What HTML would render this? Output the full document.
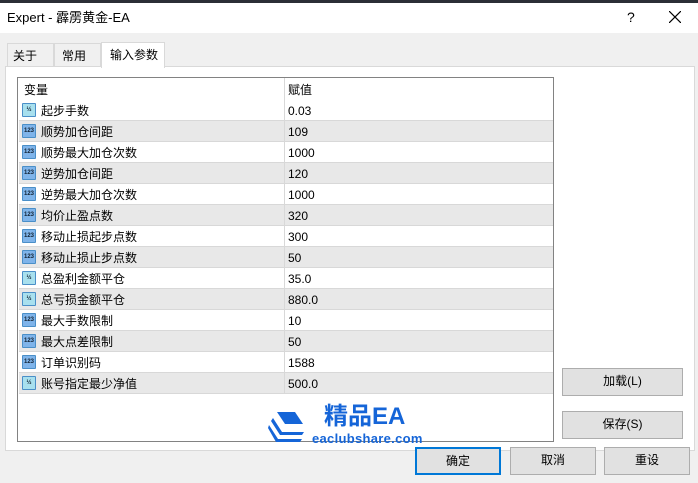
<!DOCTYPE html><html><head><meta charset="utf-8"><style>
*{margin:0;padding:0;box-sizing:border-box}
body{width:698px;height:483px;background:#f0f0f0;font-family:"Liberation Sans","Noto Sans CJK SC",sans-serif;font-size:12px;color:#000;position:relative;overflow:hidden}
.a{position:absolute}
.t{line-height:20px;height:20px}
.btn{position:absolute;background:#e1e1e1;border:1px solid #adadad;text-align:center;line-height:25px;font-size:12px}
.row{position:absolute;left:1px;width:534px;height:21px;border-bottom:1px solid #d8d8d8}
.row .n{position:absolute;left:22px;top:1px;line-height:20px;height:20px}
.row .v{position:absolute;left:269px;top:1px;line-height:20px;height:20px}
.row .d{position:absolute;left:265px;top:0;width:1px;height:21px;background:#d8d8d8}
.ic{position:absolute;left:3px;top:3px;width:14px;height:14px;border:1px solid #4a8fc8;border-radius:1px;font-size:6px;line-height:12px;text-align:center;color:#123;font-weight:bold}
.i1{background:#a8e0ee}.i2{background:#7fb4ea}
</style></head><body>
<div class="a" style="left:0;top:0;width:698px;height:3px;background:#2b2f36"></div>
<div class="a" style="left:0;top:3px;width:698px;height:30px;background:#fff"></div>
<div class="a" style="left:7px;top:9px;font-size:13px;line-height:18px">Expert - 霹雳黄金-EA</div>
<div class="a" style="left:627px;top:8px;font-size:14px;line-height:18px">?</div>
<svg class="a" style="left:669px;top:11px" width="12" height="12"><path d="M0 0L12 12M12 0L0 12" stroke="#000" stroke-width="1.2"/></svg>
<div class="a" style="left:7px;top:43px;width:47px;height:24px;border:1px solid #d9d9d9;border-bottom:none;background:#f0f0f0;padding:0 0 0 5px;line-height:24px">关于</div>
<div class="a" style="left:54px;top:43px;width:47px;height:24px;border:1px solid #d9d9d9;border-bottom:none;background:#f0f0f0;padding:0 0 0 7px;line-height:24px">常用</div>
<div class="a" style="left:5px;top:66px;width:690px;height:385px;background:#fff;border:1px solid #d9d9d9"></div>
<div class="a" style="left:101px;top:42px;width:64px;height:26px;border:1px solid #d9d9d9;border-bottom:none;background:#fff;padding:0 0 0 8px;line-height:24px">输入参数</div>
<div class="a" style="left:17px;top:77px;width:537px;height:365px;border:1px solid #828282;background:#fff">
<div class="a t" style="left:6px;top:2px">变量</div>
<div class="a" style="left:266px;top:0;width:1px;height:22px;background:#d8d8d8"></div>
<div class="a t" style="left:270px;top:2px">赋值</div>
<div id="rows"></div>
</div>
<script>
var d=[["起步手数","0.03",1],["顺势加仓间距","109",2],["顺势最大加仓次数","1000",2],["逆势加仓间距","120",2],["逆势最大加仓次数","1000",2],["均价止盈点数","320",2],["移动止损起步点数","300",2],["移动止损止步点数","50",2],["总盈利金额平仓","35.0",1],["总亏损金额平仓","880.0",1],["最大手数限制","10",2],["最大点差限制","50",2],["订单识别码","1588",2],["账号指定最少净值","500.0",1]];
var h="";d.forEach(function(r,i){h+='<div class="row" style="top:'+(22+21*i)+'px;background:'+(i%2?'#e8e8e8':'#fff')+'"><div class="ic i'+r[2]+'">'+(r[2]==1?'½':'123')+'</div><div class="n">'+r[0]+'</div><div class="d"></div><div class="v">'+r[1]+'</div></div>';});
document.getElementById("rows").outerHTML=h;
</script>
<svg class="a" style="left:268px;top:410px" width="42" height="34" viewBox="0 0 42 34"><path d="M9 2h18l8 12H17z" fill="#1565d8"/><path d="M5 8l9 14h22l-2 3H12L3 11z" fill="#1565d8"/><path d="M1 15l9 14h24l-2 3H8L0 18z" fill="#1565d8"/></svg>
<div class="a" style="left:324px;top:402px;font-size:24px;line-height:30px;font-weight:bold;color:#1565d8">精品EA</div>
<div class="a" style="left:312px;top:431px;font-size:13px;line-height:16px;font-weight:bold;color:#1565d8;letter-spacing:0.3px">eaclubshare.com</div>
<div class="btn" style="left:562px;top:368px;width:121px;height:28px">加载(L)</div>
<div class="btn" style="left:562px;top:411px;width:121px;height:28px">保存(S)</div>
<div class="btn" style="left:415px;top:447px;width:86px;height:28px;border:2px solid #0078d7;line-height:24px">确定</div>
<div class="btn" style="left:510px;top:447px;width:86px;height:28px">取消</div>
<div class="btn" style="left:604px;top:447px;width:86px;height:28px">重设</div>
</body></html>
